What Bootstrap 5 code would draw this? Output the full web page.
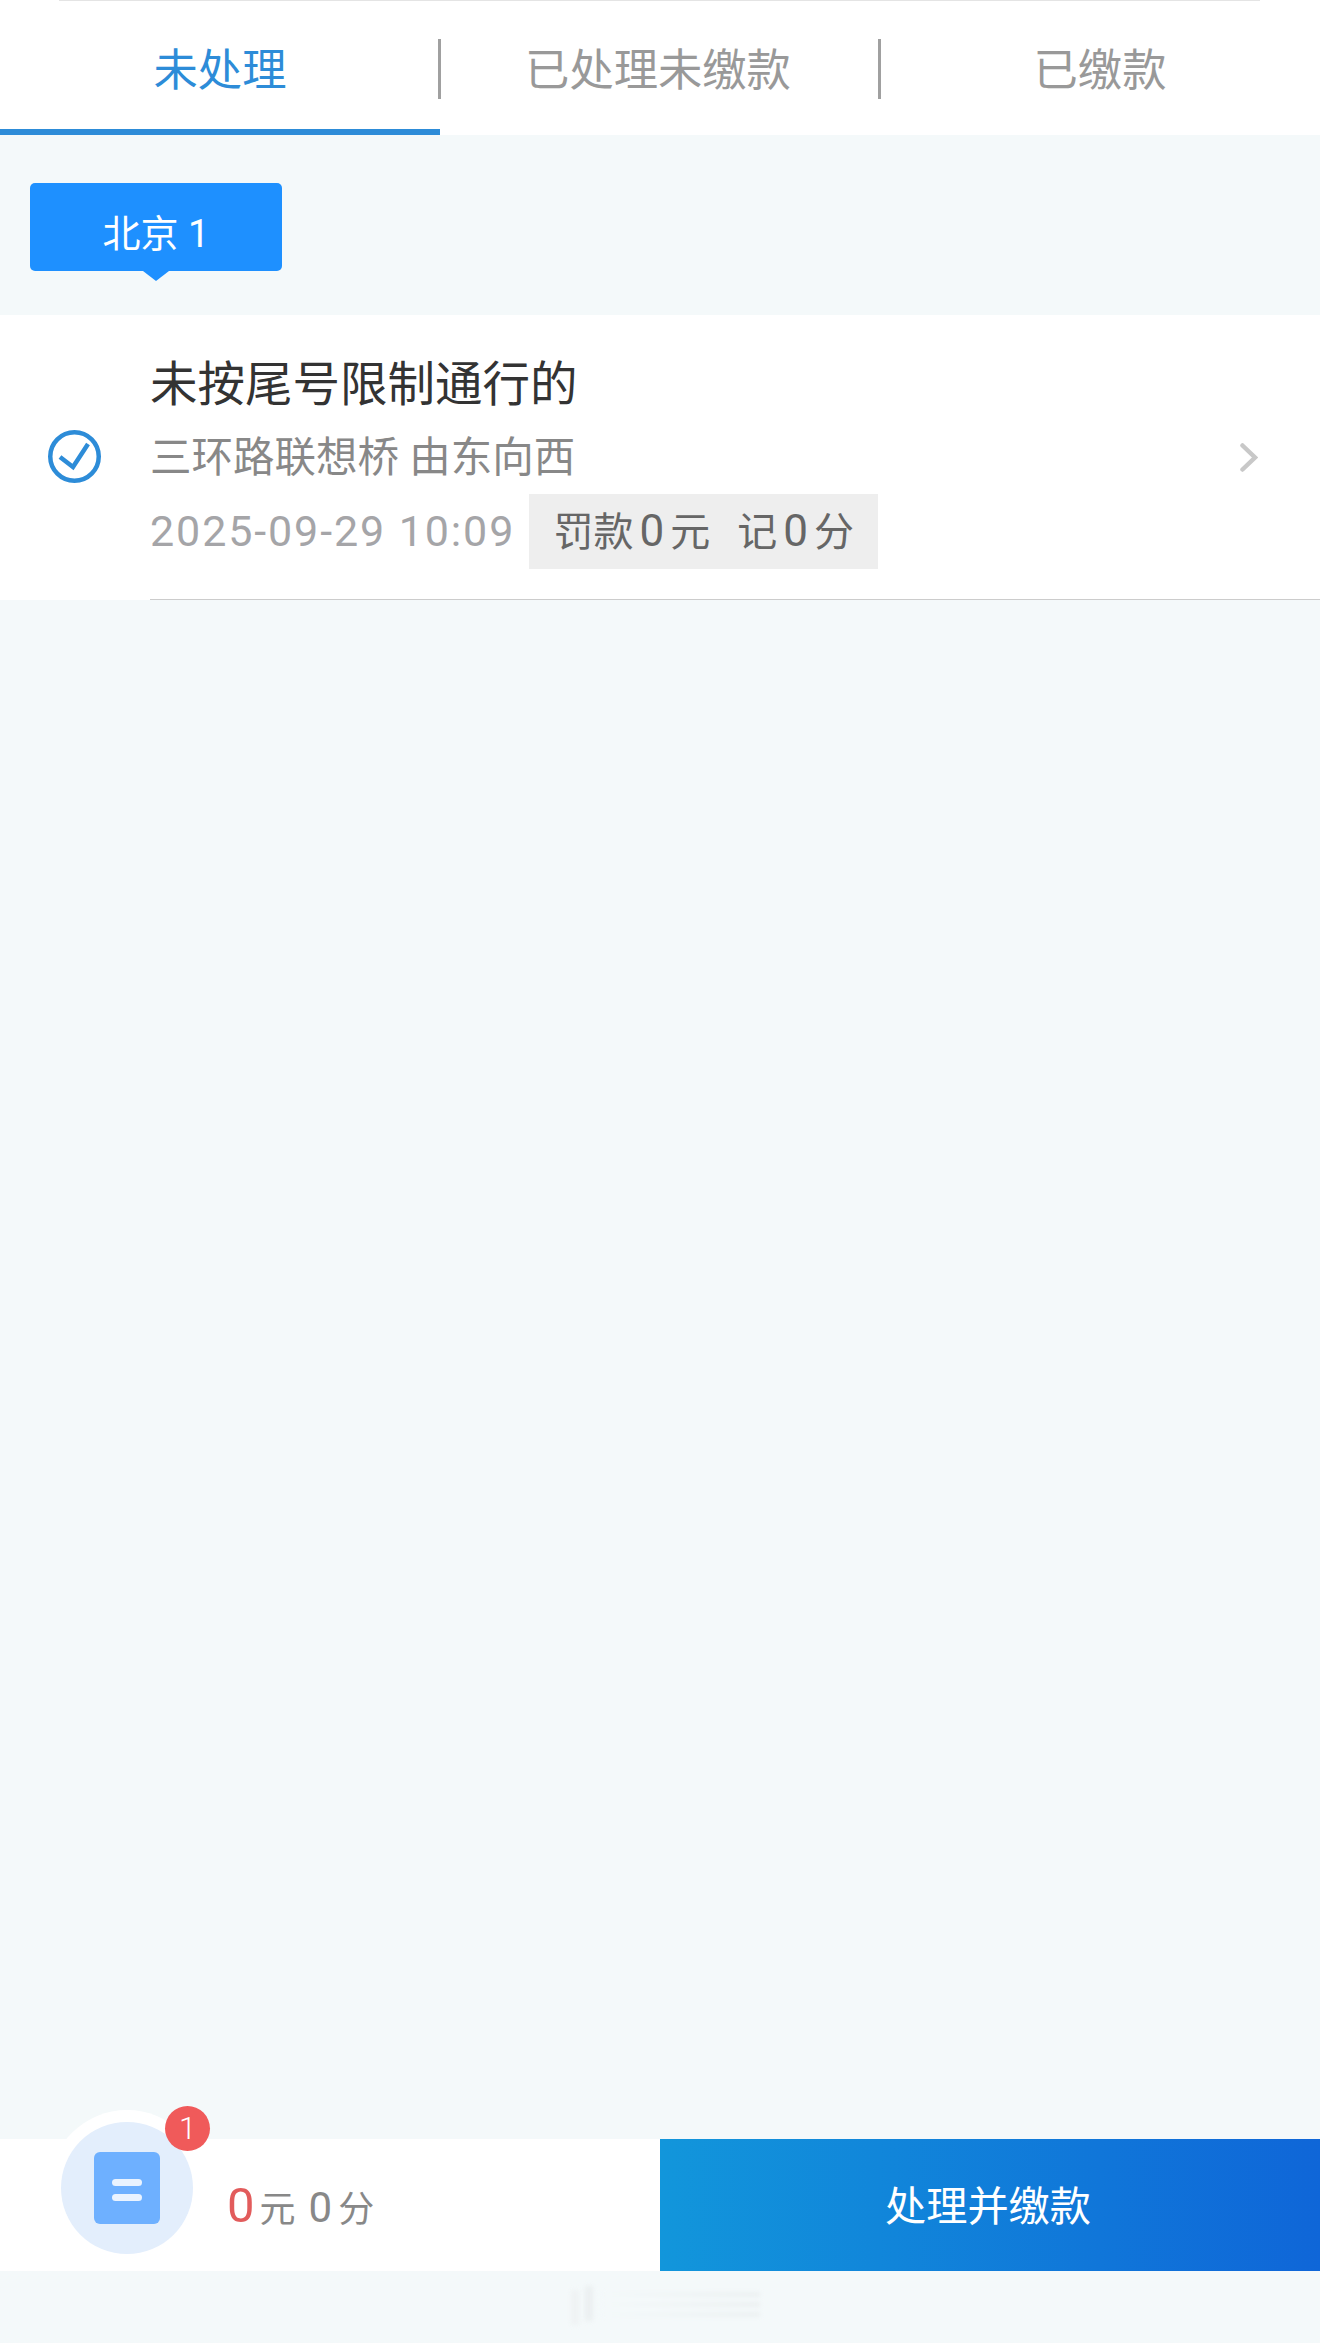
<!doctype html>
<html lang="zh-CN">
<head>
    <meta charset="utf-8">
    <meta name="viewport" content="width=device-width, initial-scale=1">
    <title>违法处理</title>
    <link href="https://cdn.jsdelivr.net/npm/bootstrap@5.3.3/dist/css/bootstrap.min.css" rel="stylesheet">
    <style>
        html, body { height: 100%; }
        body {
            background: #f4f9fa;
            font-family: Roboto, "Noto Sans CJK SC", sans-serif;
            overflow: hidden;
        }
        .tabs-bar { height: 135px; background: #fff; position: relative; }
        .tabs-bar::before {
            content: ""; position: absolute; top: 0; left: 59px; right: 60px;
            height: 1px; background: #e4e4e4;
        }
        .tab-item {
            width: 440px; height: 135px; padding-top: 41px;
            font-size: 44.3px; line-height: 60px; color: #999; text-align: center;
            position: relative;
        }
        .tab-item:nth-child(2) { padding-right: 4px; }
        .tab-item + .tab-item::before {
            content: ""; position: absolute; left: -2px; top: 39px;
            width: 3px; height: 60px; background: #a0a0a0;
        }
        .tab-item.on { color: #2d8cd8; border-bottom: 6px solid #2d8cd8; }
        .city-wrap { height: 180px; padding: 48px 0 0 30px; }
        .city-tag {
            width: 252px; height: 88px; background: #1e90ff; color: #fff;
            border-radius: 5px; font-size: 38px; line-height: 102px; text-align: center;
            position: relative;
        }
        .city-tag::after {
            content: ""; position: absolute; left: 113px; bottom: -10px;
            border-style: solid; border-width: 10px 13px 0; border-color: #1e90ff transparent transparent;
        }
        .fine-row { height: 285px; background: #fff; position: relative; }
        .fine-row::after {
            content: ""; position: absolute; left: 150px; right: 0; bottom: 0;
            height: 1px; background: #ccc;
        }
        .fine-check { width: 53px; height: 53px; margin: 115px 0 0 48px; flex: none; }
        .fine-body { margin-left: 49px; padding-top: 37px; }
        .fine-title { font-size: 47.5px; line-height: 66px; color: #333; }
        .fine-place { font-size: 41.5px; line-height: 60px; color: #888; margin-top: 10px; white-space: nowrap; }
        .fine-row-meta { margin-top: 6px; }
        .fine-time { font-size: 43px; letter-spacing: 1.9px; color: #a5a5a8; white-space: nowrap; }
        .fine-tag {
            background: #eee; color: #666; width: 349px; height: 75px; line-height: 75px;
            font-size: 40px; text-align: center; margin-left: 14px; white-space: nowrap;
        }
        .fine-tag span { font-size: 44px; margin: 0 6px; }
        .fine-tag em { font-style: normal; margin-left: 27px; }
        .fine-arrow { position: absolute; left: 1240px; top: 128px; width: 18px; height: 29px; }
        .pay-bar { height: 132px; background: #fff; margin-top: auto; position: relative; }
        .pay-sum { width: 660px; padding: 37px 0 0 227px; font-size: 36px; line-height: 60px; color: #888; }
        .pay-sum b { font-weight: 400; font-size: 49px; color: #e25c5c; margin-right: 5px; }
        .pay-sum i { font-style: normal; font-size: 42px; margin: 0 6px 0 13px; }
        .pay-btn {
            width: 660px; height: 132px; border: 0; border-radius: 0; color: #fff; font-size: 41.2px;
            padding: 6px 4px 0 0;
            background: linear-gradient(90deg, #1296db, #0f66d8);
        }
        .cart-ring {
            position: absolute; left: 49px; top: -29px; width: 156px; height: 156px;
            border-radius: 50%; background: #fff; clip-path: inset(0 0 66px 0);
        }
        .cart-circle {
            position: absolute; left: 61px; top: -17px; width: 132px; height: 132px;
            border-radius: 50%; background: #e3eefc;
        }
        .cart-doc {
            position: absolute; left: 33px; top: 30px; width: 66px; height: 72px;
            border-radius: 6px; background: #6eb0ff;
        }
        .cart-doc::before, .cart-doc::after {
            content: ""; position: absolute; left: 18px; width: 30px; height: 7px;
            border-radius: 3.5px; background: #eaf3ff;
        }
        .cart-doc::before { top: 27px; }
        .cart-doc::after { top: 42px; }
        .cart-count {
            position: absolute; left: 165px; top: -33px; width: 45px; height: 45px;
            border-radius: 50%; background: #f05a5a; color: #fff;
            font-size: 31px; font-weight: 300; line-height: 45px; text-align: center;
        }
        .home-strip { height: 72px; padding: 15px 0 0 565px; }
        .home-mark { width: 195px; height: 36px; opacity: .65; filter: blur(2.5px); }
        .home-mark-bar { width: 8px; height: 35px; margin-left: 20px; background: #e6eaeb; box-shadow: -14px 4px 0 #eceff0; }
        .home-mark-lines { width: 160px; margin-left: 8px; }
        .home-mark-lines div { height: 3px; margin-top: 7px; background: linear-gradient(90deg, #f4f9fa, #dfe3e4); }
    </style>
</head>
<body class="d-flex flex-column">
    <div class="tabs-bar d-flex">
        <div class="tab-item on">未处理</div>
        <div class="tab-item">已处理未缴款</div>
        <div class="tab-item">已缴款</div>
    </div>

    <div class="city-wrap">
        <div class="city-tag">北京 1</div>
    </div>

    <div class="fine-row d-flex">
        <svg class="fine-check" viewBox="0 0 53 53" fill="none" stroke="#2d8cd8">
            <circle cx="26.5" cy="26.5" r="24.25" stroke-width="4.5"/>
            <path d="M12 27l13 10 15-23" stroke-width="4.5"/>
        </svg>
        <div class="fine-body">
            <div class="fine-title">未按尾号限制通行的</div>
            <div class="fine-place">三环路联想桥 由东向西</div>
            <div class="fine-row-meta d-flex align-items-center">
                <span class="fine-time">2025-09-29 10:09</span>
                <div class="fine-tag">罚款<span>0</span>元<em>记</em><span>0</span>分</div>
            </div>
        </div>
        <svg class="fine-arrow" viewBox="0 0 18 29" fill="none" stroke="#c8c8c8" stroke-width="4.5" stroke-linecap="round">
            <path d="M2.5 2.5L15 14.5 2.5 26.5"/>
        </svg>
    </div>

    <div class="pay-bar d-flex">
        <div class="cart-ring"></div>
        <div class="cart-circle"><div class="cart-doc"></div></div>
        <div class="cart-count">1</div>
        <div class="pay-sum"><b>0</b>元<i>0</i>分</div>
        <button type="button" class="btn pay-btn">处理并缴款</button>
    </div>

    <div class="home-strip">
        <div class="home-mark d-flex">
            <div class="home-mark-bar"></div>
            <div class="home-mark-lines"><div></div><div></div><div></div></div>
        </div>
    </div>

    <script src="https://cdn.jsdelivr.net/npm/bootstrap@5.3.3/dist/js/bootstrap.bundle.min.js"></script>
</body>
</html>
